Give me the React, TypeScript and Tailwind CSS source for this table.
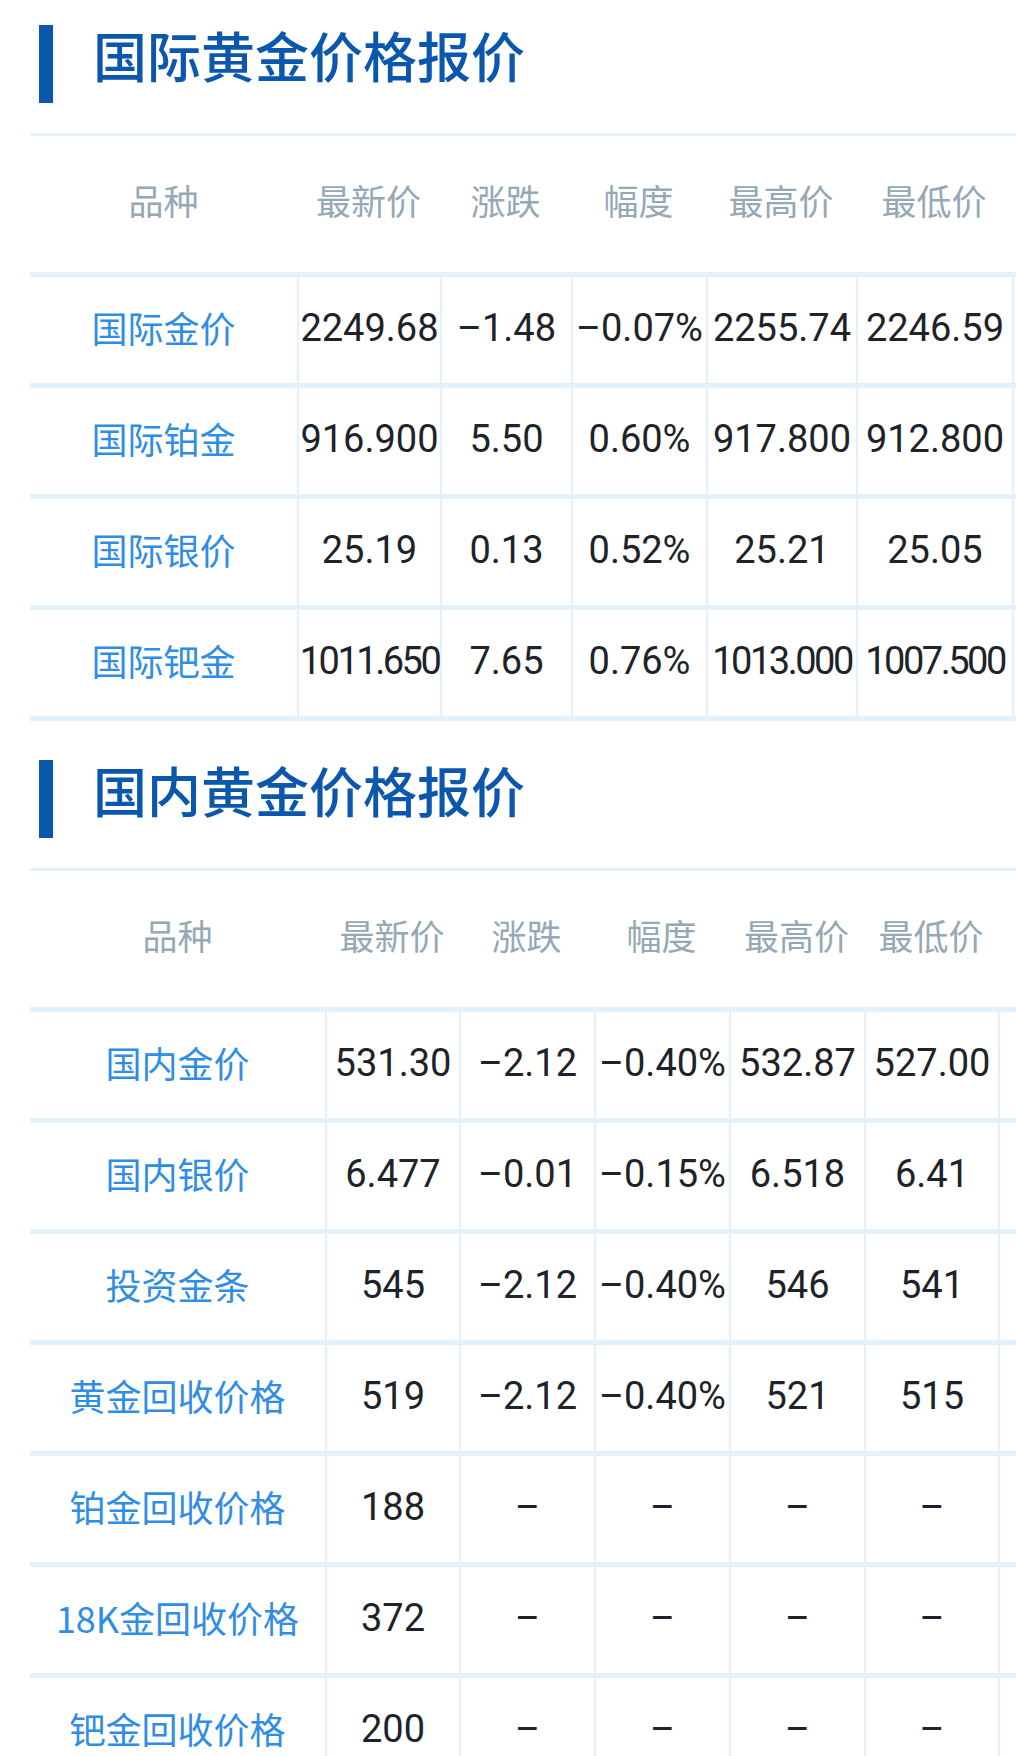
import React from 'react';

type Row = { name: string; values: string[] };

const intlRows: Row[] = [
  { name: '国际金价', values: ['2249.68', '–1.48', '–0.07%', '2255.74', '2246.59'] },
  { name: '国际铂金', values: ['916.900', '5.50', '0.60%', '917.800', '912.800'] },
  { name: '国际银价', values: ['25.19', '0.13', '0.52%', '25.21', '25.05'] },
  { name: '国际钯金', values: ['1011.650', '7.65', '0.76%', '1013.000', '1007.500'] },
];

const domesticRows: Row[] = [
  { name: '国内金价', values: ['531.30', '–2.12', '–0.40%', '532.87', '527.00'] },
  { name: '国内银价', values: ['6.477', '–0.01', '–0.15%', '6.518', '6.41'] },
  { name: '投资金条', values: ['545', '–2.12', '–0.40%', '546', '541'] },
  { name: '黄金回收价格', values: ['519', '–2.12', '–0.40%', '521', '515'] },
  { name: '铂金回收价格', values: ['188', '–', '–', '–', '–'] },
  { name: '18K金回收价格', values: ['372', '–', '–', '–', '–'] },
  { name: '钯金回收价格', values: ['200', '–', '–', '–', '–'] },
];

const headers = ['品种', '最新价', '涨跌', '幅度', '最高价', '最低价'];

// column widths measured off the screenshot, the 7th column is cut off by the viewport
const intlCols = ['w-[267px]', 'w-[143px]', 'w-[131px]', 'w-[135px]', 'w-[150px]', 'w-[156px]', 'w-[160px]'];
const domesticCols = ['w-[295px]', 'w-[134px]', 'w-[135px]', 'w-[135px]', 'w-[135px]', 'w-[134px]', 'w-[160px]'];

const cjk = 'font-["Noto_Sans_CJK_SC","Noto_Sans",sans-serif]';

function SectionTitle({ title }: { title: string }) {
  return (
    <div className="flex h-[78px] items-start pl-[39px]">
      <div className="h-[78px] w-[14px] bg-[#0a57ad]" />
      <h2
        className={`${cjk} ml-[40px] mt-[3px] text-[54px] font-medium leading-[54px] text-[#0a57ad]`}
      >
        {title}
      </h2>
    </div>
  );
}

function PriceTable({ rows, cols }: { rows: Row[]; cols: string[] }) {
  return (
    <div className="ml-[30px] flex w-max flex-col">
      <div className="flex h-[144px] border-t-[3px] border-b-[5px] border-[#e3f1fc]">
        {cols.map((w, i) => (
          <div
            key={i}
            className={`${w} ${cjk} flex shrink-0 items-center justify-center pb-[8px] text-[35px] text-[#95a8b6]`}
          >
            {headers[i] ?? ''}
          </div>
        ))}
      </div>
      {rows.map((row) => (
        <div key={row.name} className="flex h-[111px] border-b-[5px] border-[#e3f1fc]">
          <div
            className={`${cols[0]} ${cjk} flex shrink-0 items-center justify-center whitespace-nowrap pb-[6px] text-[36px] text-[#2f8de6]`}
          >
            {row.name}
          </div>
          {cols.slice(1).map((w, i) => {
            const v = row.values[i] ?? '';
            return (
              <div
                key={i}
                className={`${w} flex shrink-0 items-center justify-center whitespace-nowrap border-l-2 border-[#e3f1fc] pb-[4px] font-["Roboto","Liberation_Sans",sans-serif] text-[38px] text-[#1d2329] ${
                  v.length >= 8 ? 'tracking-[-2.5px]' : ''
                }`}
              >
                {v}
              </div>
            );
          })}
        </div>
      ))}
    </div>
  );
}

export default function App() {
  return (
    <div className="min-h-screen w-full overflow-x-hidden bg-white pt-[25px]">
      <section>
        <SectionTitle title="国际黄金价格报价" />
        <div className="mt-[30px]">
          <PriceTable rows={intlRows} cols={intlCols} />
        </div>
      </section>
      <section className="mt-[39px]">
        <SectionTitle title="国内黄金价格报价" />
        <div className="mt-[30px]">
          <PriceTable rows={domesticRows} cols={domesticCols} />
        </div>
      </section>
    </div>
  );
}
